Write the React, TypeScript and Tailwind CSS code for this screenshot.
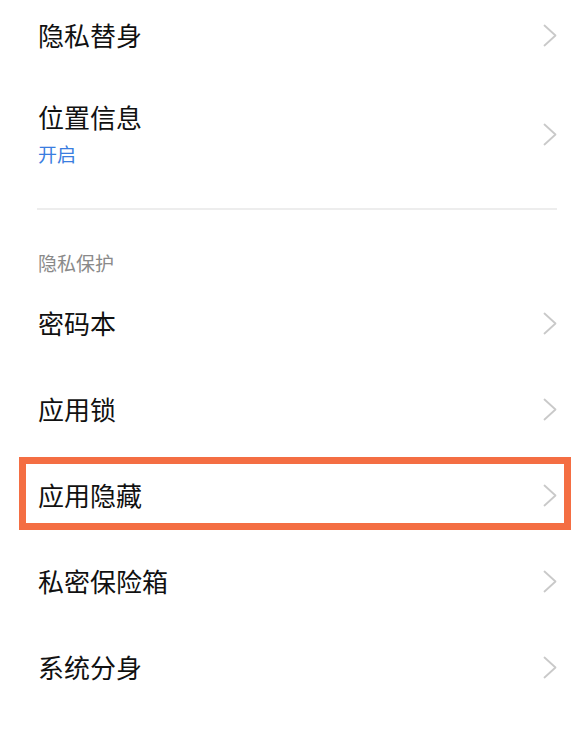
import React from "react";

function Chevron() {
  return (
    <svg width="14" height="23" viewBox="0 0 14 23" fill="none" className="shrink-0">
      <polyline
        points="1.5,1.5 12.5,11.5 1.5,21.5"
        stroke="#c9c9c9"
        strokeWidth="1.8"
        strokeLinecap="round"
        strokeLinejoin="round"
      />
    </svg>
  );
}

function Row({ title, highlight }: { title: string; highlight?: boolean }) {
  return (
    <div className="relative flex h-[86px] items-center justify-between">
      <span className="text-[26px] leading-[30px] text-[#111]">{title}</span>
      <Chevron />
      {highlight && (
        <div className="pointer-events-none absolute -left-[19px] top-[5px] h-[73px] w-[552px] border-[7px] border-[#f46e43]" />
      )}
    </div>
  );
}

export default function App() {
  return (
    <div
      className="h-[730px] w-[586px] overflow-hidden bg-white pl-[38px] pr-[29px]"
      style={{ fontFamily: '"Noto Sans CJK SC", "Noto Sans", sans-serif' }}
    >
      <div className="flex h-[70px] items-center justify-between">
        <span className="text-[26px] leading-[30px] text-[#111]">隐私替身</span>
        <Chevron />
      </div>
      <div className="flex h-[128px] items-center justify-between">
        <div className="flex flex-col">
          <span className="text-[26px] leading-[30px] text-[#111]">位置信息</span>
          <span className="mt-[10px] text-[19px] leading-[24px] text-[#3a7de0]">开启</span>
        </div>
        <Chevron />
      </div>
      <div className="mt-[10px] h-[2px] -ml-px bg-[#ededed]" />
      <div className="pb-[5px] pt-[41px] text-[19px] leading-[24px] text-[#8a8a8a]">隐私保护</div>
      <Row title="密码本" />
      <Row title="应用锁" />
      <Row title="应用隐藏" highlight />
      <Row title="私密保险箱" />
      <Row title="系统分身" />
    </div>
  );
}
